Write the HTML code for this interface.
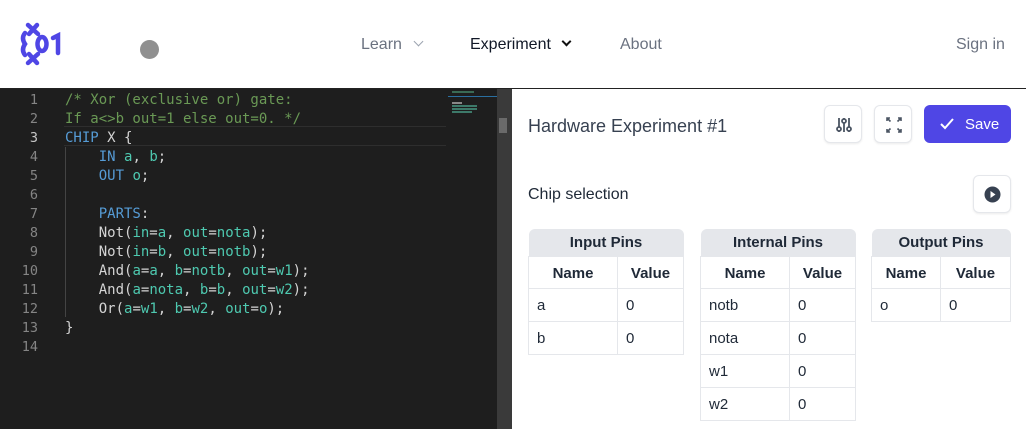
<!DOCTYPE html>
<html><head><meta charset="utf-8"><style>
*{box-sizing:border-box;margin:0;padding:0}
body{width:1026px;height:429px;overflow:hidden;background:#fff;font-family:"Liberation Sans",sans-serif;position:relative;color:#1f2937}
.hdr{position:absolute;left:0;top:0;width:1026px;height:89px;border-bottom:1px solid #222}
.nav{position:absolute;top:36px;font-size:16px}
.ed{position:absolute;left:0;top:89px;width:497px;height:340px;background:#1e1e1e;font-family:"DejaVu Sans Mono",monospace;font-size:14px}
.ln{position:absolute;left:0;width:38px;text-align:right;color:#858585;font-size:13.5px}
.cd{position:absolute;left:65px;white-space:pre;color:#d4d4d4}
.c{color:#6a9955}.k{color:#569cd6}.v{color:#4ec9b0}
.sb{position:absolute;left:497px;top:89px;width:15px;height:340px;background:#3a3a3a}
.btn{position:absolute;width:38px;height:38px;border:1px solid #e5e7eb;border-radius:6px;background:#fff;box-shadow:0 1px 2px rgba(0,0,0,.08)}
table{position:absolute;border-collapse:collapse;font-size:15px}
th.t{background:#e5e7eb;height:27px;font-weight:bold;border-radius:6px 6px 0 0}
td,th.h{border:1px solid #e5e7eb;padding:2px 8px 0;height:33px;text-align:left}
th.h{text-align:center;font-weight:bold;height:32px}
.mm{position:absolute;height:2px;background:#3d7a6a}
</style></head><body>
<div class="hdr">
<svg style="position:absolute;left:20px;top:22px" width="44" height="44" viewBox="0 0 44 44"><g stroke="#4f46e5" stroke-width="4.5" stroke-linecap="round" fill="none"><path d="M5 11 Q1 16 5 22 Q1 28 5 33"/><path d="M8 3 L18 12 M17 3 L9 12"/><path d="M8 41 L18 32 M17 41 L9 32"/><ellipse cx="22" cy="22" rx="4.5" ry="7"/><path d="M33 16 L38 13.5 L38 31"/></g></svg>
<div style="position:absolute;left:140px;top:40px;width:19px;height:19px;border-radius:50%;background:#909090"></div>
<div class="nav" style="left:361px;color:#6b7280">Learn <span style="display:inline-block;width:7px;height:7px;border-right:1.5px solid #9ca3af;border-bottom:1.5px solid #9ca3af;transform:rotate(45deg);margin:0 0 4px 9px"></span></div>
<div class="nav" style="left:470px;color:#111827">Experiment <span style="display:inline-block;width:7px;height:7px;border-right:2px solid #111;border-bottom:2px solid #111;transform:rotate(45deg);margin:0 0 4px 8px"></span></div>
<div class="nav" style="left:620px;color:#6b7280">About</div>
<div class="nav" style="left:956px;color:#6b7280">Sign in</div>
</div>
<div class="ed">
<div style="position:absolute;left:64px;top:37px;width:382px;height:20px;border-top:1px solid #2e2e2e;border-bottom:1px solid #2e2e2e"></div>
<div style="position:absolute;left:65px;top:58px;width:1px;height:170px;background:#444"></div>
<div style="position:absolute;left:448px;top:7px;width:49px;height:1px;background:#2a6fa0"></div>
<div class="mm" style="left:452px;top:2px;width:22px;background:#3a6a55"></div>
<div class="mm" style="left:452px;top:13px;width:10px;background:#888"></div>
<div class="mm" style="left:452px;top:16px;width:25px"></div>
<div class="mm" style="left:452px;top:19px;width:25px"></div>
<div class="mm" style="left:452px;top:22px;width:20px"></div>
<div class="ln" style="top:2px;line-height:19px">1<br>2<br><span style="color:#c6c6c6">3</span><br>4<br>5<br>6<br>7<br>8<br>9<br>10<br>11<br>12<br>13<br>14</div>
<div class="cd" style="top:2px;line-height:19px"><span class="c">/* Xor (exclusive or) gate:</span>
<span class="c">If a&lt;&gt;b out=1 else out=0. */</span>
<span class="k">CHIP</span> X {
    <span class="k">IN</span> <span class="v">a</span>, <span class="v">b</span>;
    <span class="k">OUT</span> <span class="v">o</span>;

    <span class="k">PARTS</span>:
    Not(<span class="v">in</span>=<span class="v">a</span>, <span class="v">out</span>=<span class="v">nota</span>);
    Not(<span class="v">in</span>=<span class="v">b</span>, <span class="v">out</span>=<span class="v">notb</span>);
    And(<span class="v">a</span>=<span class="v">a</span>, <span class="v">b</span>=<span class="v">notb</span>, <span class="v">out</span>=<span class="v">w1</span>);
    And(<span class="v">a</span>=<span class="v">nota</span>, <span class="v">b</span>=<span class="v">b</span>, <span class="v">out</span>=<span class="v">w2</span>);
    Or(<span class="v">a</span>=<span class="v">w1</span>, <span class="v">b</span>=<span class="v">w2</span>, <span class="v">out</span>=<span class="v">o</span>);
}
</div></div>
<div class="sb"><div style="position:absolute;left:2px;top:29px;width:8px;height:15px;background:#6a6a6a"></div></div>
<div style="position:absolute;left:528px;top:116px;font-size:18px;color:#374151">Hardware Experiment #1</div>
<div class="btn" style="left:824px;top:105px"><svg width="38" height="38" viewBox="0 0 38 38" fill="none" stroke="#4b5563" stroke-width="1.8"><path d="M14 12v14M19 12v14M24 12v14"/><circle cx="14" cy="23" r="2" fill="#fff"/><circle cx="19" cy="15" r="2" fill="#fff"/><circle cx="24" cy="23" r="2" fill="#fff"/></svg></div>
<div class="btn" style="left:874px;top:105px"><svg width="38" height="38" viewBox="0 0 38 38" fill="none" stroke="#4b5563" stroke-width="1.6"><path d="M12 15v-3h3M12 12l3.5 3.5M26 15v-3h-3M26 12l-3.5 3.5M12 23v3h3M12 26l3.5-3.5M26 23v3h-3M26 26l-3.5-3.5"/></svg></div>
<div style="position:absolute;left:924px;top:105px;width:87px;height:38px;border-radius:6px;background:#4f46e5;color:#fff;font-size:15px"><svg style="position:absolute;left:15px;top:12px" width="16" height="14" viewBox="0 0 16 14" fill="none" stroke="#fff" stroke-width="2"><path d="M2 7l4 4 8-9"/></svg><span style="position:absolute;left:41px;top:11px">Save</span></div>
<div style="position:absolute;left:528px;top:186px;font-size:16px;color:#1f2937">Chip selection</div>
<div class="btn" style="left:973px;top:175px"><svg width="38" height="38" viewBox="0 0 38 38"><circle cx="18.5" cy="18.5" r="8" fill="#374151"/><path d="M16.5 15v7l5-3.5z" fill="#fff"/></svg></div>
<table style="left:528px;top:229px;width:156px"><tr><th class="t" colspan="2">Input Pins</th></tr><tr><th class="h" style="width:89px">Name</th><th class="h">Value</th></tr><tr><td>a</td><td>0</td></tr><tr><td>b</td><td>0</td></tr></table>
<table style="left:700px;top:229px;width:156px"><tr><th class="t" colspan="2">Internal Pins</th></tr><tr><th class="h" style="width:89px">Name</th><th class="h">Value</th></tr><tr><td>notb</td><td>0</td></tr><tr><td>nota</td><td>0</td></tr><tr><td>w1</td><td>0</td></tr><tr><td>w2</td><td>0</td></tr></table>
<table style="left:871px;top:229px;width:140px"><tr><th class="t" colspan="2">Output Pins</th></tr><tr><th class="h" style="width:69px">Name</th><th class="h">Value</th></tr><tr><td>o</td><td>0</td></tr></table>
</body></html>
